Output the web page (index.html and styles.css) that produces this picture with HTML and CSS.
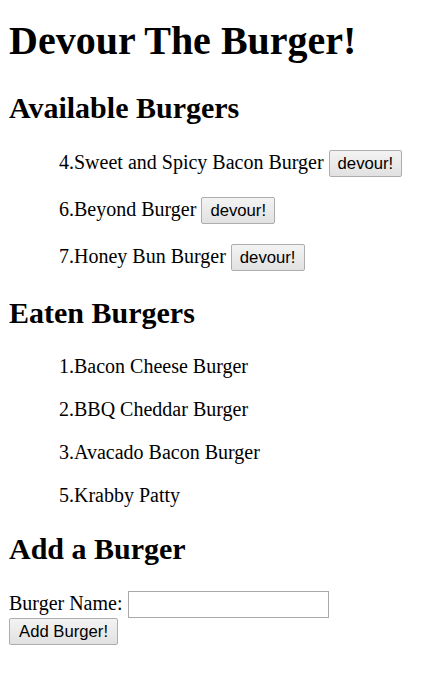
FILE: index.html
```html
<!DOCTYPE html>
<html>
<head>
<meta charset="utf-8">
<link rel="stylesheet" href="styles.css">
</head>
<body>
<h1 class="title">Devour The Burger!</h1>
<h2 class="section">Available Burgers</h2>
<ul class="list">
  <li class="item">4.Sweet and Spicy Bacon Burger <button class="btn">devour!</button></li>
  <li class="item">6.Beyond Burger <button class="btn">devour!</button></li>
  <li class="item">7.Honey Bun Burger <button class="btn">devour!</button></li>
</ul>
<h2 class="section">Eaten Burgers</h2>
<ul class="list">
  <li class="item">1.Bacon Cheese Burger</li>
  <li class="item">2.BBQ Cheddar Burger</li>
  <li class="item">3.Avacado Bacon Burger</li>
  <li class="item">5.Krabby Patty</li>
</ul>
<h2 class="section">Add a Burger</h2>
<form class="form">
  <label class="label">Burger Name:</label> <input class="input" type="text"><br>
  <button class="btn add" type="button">Add Burger!</button>
</form>
</body>
</html>
```
FILE: styles.css
```css
html, body {
  margin: 0;
  padding: 0;
  background: #fff;
}
body {
  padding: 0 10px 0 9px;
  font-family: "Liberation Serif", "Times New Roman", serif;
  font-size: 20px;
  color: #000;
}
.title {
  font-size: 40px;
  font-weight: bold;
  margin: 17px 0 27px;
}
.section {
  font-size: 30px;
  font-weight: bold;
  margin: 25px 0;
}
.list {
  list-style: none;
  margin: 0;
  padding: 0 0 0 50px;
}
.item {
  margin: 20px 0;
}
.btn {
  font-family: "Liberation Sans", Arial, sans-serif;
  font-size: 16.7px;
  color: #000;
  padding: 1px 8px;
  height: 27px;
  border: 1px solid #adadad;
  border-radius: 2px;
  background: linear-gradient(#f3f3f3, #e1e1e1);
  vertical-align: baseline;
}
.form {
  margin: 0;
  padding-top: 0;
}
.input {
  width: 201px;
  height: 27px;
  box-sizing: border-box;
  border: 1px solid #a9a9a9;
  padding: 1px 2px;
  font-size: 16px;
  margin: 0;
}
.add {
  margin-top: 0;
  padding: 1px 9px;
}
```
